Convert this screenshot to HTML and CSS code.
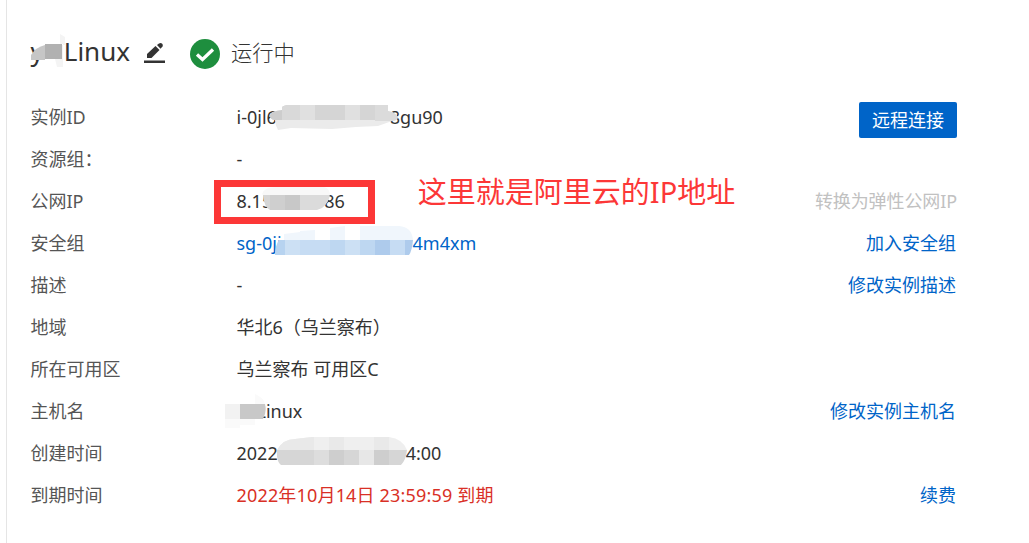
FILE: index.html
```html
<!DOCTYPE html>
<html lang="zh-CN">
<head>
  <meta charset="UTF-8">
  <meta name="viewport" content="width=device-width, initial-scale=1.0">
  <title>实例详情</title>
  <link rel="stylesheet" href="styles.css">
</head>
<body>
  <div class="panel">
    <!-- Instance name and status -->
    <div class="header">
      <h1 class="masked"><span>y</span><svg class="mosaic mosaic-name" width="34" height="36" viewBox="0 0 34 36">
          <path d="M29 1 34 4V12H31V26H32V34H26L24 26H32V11H29Z" fill="#f4f4f4"/>
          <path d="M0 22Q5 14 14 12V27H0Z" fill="#c6c6c6"/>
          <path d="M14 11H31V26H14Z" fill="#b1b1b1"/>
        </svg><span>Linux</span></h1>
      <svg class="edit" width="22" height="22" viewBox="0 0 22 22" fill="#333">
        <path d="M0 18.500H21V21H0Z"/>
        <path d="M3 16V12L11.500 4 15.500 8 7.500 16Z"/>
        <path d="M13 3 15 1.500Q16.500 .5 18 1.500Q19.500 3 18.500 4.500L16.500 6.800Z"/>
      </svg>
      <svg class="check" width="30" height="30" viewBox="0 0 30 30">
        <circle cx="15" cy="15" r="15" fill="#1e8e3e"/>
        <path d="M7 15.500 12.500 20.500 23 10.500" fill="none" stroke="#fff" stroke-width="3.300"/>
      </svg>
      <span class="status">运行中</span>
    </div>

    <!-- Instance details -->
    <div class="list">
      <div class="row">
        <div class="label">实例ID</div>
        <div class="value masked"><span>i-0jl6</span><svg class="mosaic mosaic-id" width="128" height="25" viewBox="0 0 128 25">
            <clipPath id="clip-id"><path d="M0 10Q1 6 12 5V2L16 0H118V6Q125 7 128 12Q127 16 122 16L108 21 86 22 62 24 21 23 8 25Q5 20 5 15Q0 15 0 10Z"/></clipPath>
            <g clip-path="url(#clip-id)">
              <path d="M0 0H128V25H0Z" fill="#ebebeb"/>
              <path d="M0 0H15V15H0Z" fill="#cdcdcd"/>
              <path d="M12 0H30V15H12Z" fill="#d9d9d9"/>
              <path d="M30 0H45V15H30ZM75 0H90V15H75Z" fill="#e0e0e0"/>
              <path d="M45 0H75V15H45ZM90 0H105V15H90Z" fill="#d5d5d5"/>
              <path d="M105 0H128V16H105Z" fill="#dbdbdb"/>
            </g>
          </svg><span>8gu90</span></div>
        <button class="connect">远程连接</button>
      </div>
      <div class="row">
        <div class="label">资源组：</div>
        <div class="value">-</div>
      </div>
      <div class="row">
        <div class="label">公网IP</div>
        <div class="value masked"><span>8.15</span><svg class="mosaic mosaic-ip" width="68" height="23" viewBox="0 0 68 23">
            <clipPath id="clip-ip"><path d="M0 7Q2 0 14 0H62Q67 1 68 7Q67 16 60 21L55 23H8Q2 20 1 8Z"/></clipPath>
            <g clip-path="url(#clip-ip)">
              <path d="M0 0H68V8H0Z" fill="#f8f8f8"/>
              <path d="M0 8H8V23H0Z" fill="#d6d6d6"/>
              <path d="M8 8H23V23H8Z" fill="#cfcfcf"/>
              <path d="M23 8H38V23H23Z" fill="#c8c8c8"/>
              <path d="M38 8H68V23H38Z" fill="#dbdbdb"/>
            </g>
          </svg><span>86</span><i class="frame"></i></div>
        <span class="note">这里就是阿里云的IP地址</span>
        <a class="action disabled">转换为弹性公网IP</a>
      </div>
      <div class="row">
        <div class="label">安全组</div>
        <div class="value masked link"><span>sg-0jj</span><svg class="mosaic mosaic-sg" width="138" height="29" viewBox="0 0 138 29">
            <path d="M9 14V8L25 6V5L40 4V14ZM55 14V2L70 0V14ZM85 14V0H124Q137 1 138 14Z" fill="#f0f6fc"/>
            <path d="M4 14H15V29H0Q0 20 4 14Z" fill="#b7d3f0"/>
            <path d="M10 14H25V29H10ZM70 14H85V29H70Z" fill="#cce0f4"/>
            <path d="M25 14H55V29H25ZM115 14H130V29H115Z" fill="#c6dcf3"/>
            <path d="M55 14H70V29H55ZM85 14H100V29H85Z" fill="#bed7f1"/>
            <path d="M100 14H115V29H100ZM130 14H138Q137 25 134 29H130Z" fill="#aecbec"/>
          </svg><span>4m4xm</span></div>
        <a class="action">加入安全组</a>
      </div>
      <div class="row">
        <div class="label">描述</div>
        <div class="value">-</div>
        <a class="action">修改实例描述</a>
      </div>
      <div class="row">
        <div class="label">地域</div>
        <div class="value">华北6（乌兰察布）</div>
      </div>
      <div class="row">
        <div class="label">所在可用区</div>
        <div class="value">乌兰察布 可用区C</div>
      </div>
      <div class="row">
        <div class="label">主机名</div>
        <div class="value masked"><svg class="mosaic mosaic-host" width="41" height="34" viewBox="0 0 41 34">
            <path d="M30 0Q39 4 40 10H30ZM0 25H30V31H15V34H0Z" fill="#fafafa"/>
            <path d="M0 10H15V25H0Z" fill="#f2f2f2"/>
            <path d="M15 10H40Q42 18 38 25H15Z" fill="#c8c8c8"/>
          </svg><span>Linux</span></div>
        <a class="action">修改实例主机名</a>
      </div>
      <div class="row">
        <div class="label">创建时间</div>
        <div class="value masked"><span>2022</span><svg class="mosaic mosaic-time" width="130" height="28" viewBox="0 0 130 28">
            <clipPath id="clip-time"><path d="M0 13Q6 2 18 2L35 0H112Q126 2 130 13Q129 23 124 28H4Q-1 24 0 13Z"/></clipPath>
            <g clip-path="url(#clip-time)">
              <path d="M0 0H130V13H0Z" fill="#efefef"/>
              <path d="M0 0H37V13H0ZM52 0H67V13H52ZM97 0H112V13H97Z" fill="#e9e9e9"/>
              <path d="M0 13H130V28H0Z" fill="#d6d6d6"/>
              <path d="M37 13H52V28H37Z" fill="#dddddd"/>
              <path d="M52 13H67V28H52ZM97 13H112V28H97Z" fill="#cecece"/>
              <path d="M82 13H97V28H82Z" fill="#e7e7e7"/>
            </g>
          </svg><span>4:00</span></div>
      </div>
      <div class="row">
        <div class="label">到期时间</div>
        <div class="value expire">2022年10月14日 23:59:59 到期</div>
        <a class="action">续费</a>
      </div>
    </div>
  </div>
</body>
</html>
```
FILE: styles.css
```css
* {
  margin: 0;
  padding: 0;
  box-sizing: border-box;
}

body {
  height: 543px;
  background-color: #fff;
  color: #333;
  font-family: "Noto Sans", "Noto Sans CJK SC", sans-serif;
  font-size: 18px;
  font-weight: 400;
  overflow: hidden;
}

.panel {
  height: 543px;
  margin-left: 6px;
  padding: 24px 73px 0 23.5px;
  border-left: 1px solid #e5e5e5;
}

/* Header */
.header {
  display: flex;
  align-items: center;
  height: 60px;
}

h1 {
  width: 99px;
  font-size: 26px;
  font-weight: 400;
  line-height: 36px;
  margin-top: -6px;
}

.edit {
  margin-left: 14px;
  margin-top: -3px;
}

.check {
  margin-left: 24.5px;
}

.status {
  margin-left: 11px;
  margin-top: -5px;
  font-size: 21.3px;
  font-weight: 300;
  color: #333;
}

/* Detail rows */
.list {
  margin-top: 12px;
}

.row {
  display: flex;
  align-items: center;
  height: 42px;
  line-height: 26px;
  white-space: nowrap;
}

.label {
  width: 206px;
  color: #555;
}

.value {
  color: #333;
}

.link,
.action {
  color: #0064c8;
}

.action,
.connect {
  margin-left: auto;
}

.disabled {
  margin-right: -1px;
  color: #c1c1c1;
  letter-spacing: -0.1px;
}

.expire {
  color: #d93026;
  letter-spacing: 0.17px;
}

.connect {
  width: 98px;
  height: 36px;
  margin-right: -1px;
  margin-top: 6px;
  border: none;
  border-radius: 2px;
  background-color: #0064c8;
  color: #fff;
  font: inherit;
}

/* Masked text */
.masked {
  display: flex;
  align-items: center;
  position: relative;
}

.mosaic {
  flex: none;
  position: relative;
  z-index: 1;
}

.mosaic-name {
  margin: -1px -1px 0 -13px;
}

.mosaic-id {
  margin: 0 -8px 0 -7px;
}

.mosaic-ip {
  margin: -5px -6px 0 -10px;
}

.mosaic-sg {
  margin: -6px 0 0 -7px;
}

.mosaic-host {
  margin: 0 -9px 0 -12px;
}

.mosaic-time {
  margin: -4px -1px 0 -1px;
}

/* Red box around the public IP */
.frame {
  position: absolute;
  left: -23px;
  top: -8px;
  width: 161px;
  height: 44px;
  border: 7px solid #fc3737;
}

.note {
  margin-left: 73px;
  margin-top: -18px;
  color: #fc3737;
  font-size: 29px;
  line-height: 40px;
}
```
